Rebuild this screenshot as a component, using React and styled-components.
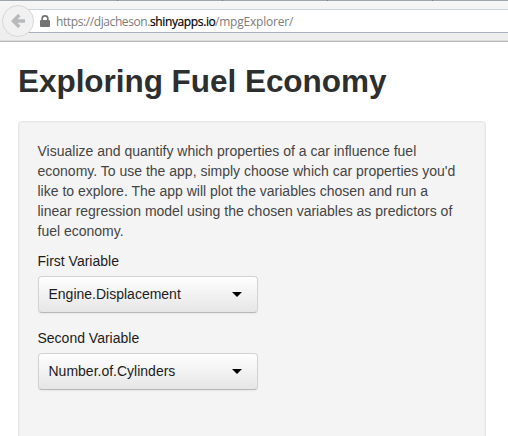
import React from "react";
import styled, { createGlobalStyle } from "styled-components";

const GlobalStyle = createGlobalStyle`
  * { box-sizing: border-box; }
  body {
    margin: 0;
    overflow: hidden;
    background: #fff;
    color: #333;
    font: 14px/20px "Liberation Sans", Arial, sans-serif;
  }
`;

const Page = styled.div`
  height: 436px;
  overflow: hidden;
`;

const TabEdge = styled.div`
  display: flex;
  justify-content: space-between;
  height: 1px;
  padding: 0 75px 0 117px;
  background: #9ea3b0;
`;

const TabDivider = styled.span`
  width: 1px;
  background: #777c88;
`;

const Toolbar = styled.header`
  display: flex;
  align-items: center;
  height: 41px;
  padding-left: 2px;
  background: linear-gradient(#f7f6f7, #eeeeee 80%);
  border-bottom: 1px solid #b8b8b8;
  box-shadow: inset 0 -1px #dddddd;
`;

const BackButton = styled.button`
  z-index: 1;
  display: flex;
  flex: none;
  align-items: center;
  justify-content: center;
  width: 32px;
  height: 32px;
  padding: 0;
  border: 1px solid #d8d8d9;
  border-radius: 50%;
  background: #f1f1f2;
`;

const AddressBar = styled.div`
  display: flex;
  flex: 1;
  align-items: center;
  height: 24px;
  margin-left: -7px;
  padding-left: 13px;
  border-top: 1px solid #c9d0d7;
  border-bottom: 1px solid #a9b0bd;
  background: #fff;
`;

const LockIcon = styled.svg`
  flex: none;
  margin-right: 6px;
`;

const UrlPart = styled.span`
  flex: none;
  width: ${(p) => p.$width}px;
  padding-top: 2px;
  font: 12px/20px "Open Sans", "Noto Sans", sans-serif;
  letter-spacing: ${(p) => p.$spacing}px;
  color: ${(p) => (p.$host ? "#000" : "#7c7c7c")};
  -webkit-text-stroke: ${(p) => (p.$host ? "0.2px #000" : "0")};
  white-space: nowrap;
`;

const Content = styled.main`
  padding: 19px 22px 0 18px;
`;

const Title = styled.h1`
  margin: 0 0 20px;
  font-size: 31.5px;
  line-height: 40px;
  font-weight: bold;
  letter-spacing: -0.04px;
  color: #2d2f2f;
`;

const Well = styled.section`
  width: 468px;
  height: 340px;
  padding: 19px 19px 19px 18.5px;
  border: 1px solid #e6e6e6;
  border-radius: 4px;
  background: #f4f4f4;
  box-shadow: inset 0 0 1px 1px rgba(0, 0, 0, 0.025);
`;

const Description = styled.p`
  margin: 0 0 10px;
  color: #444;
  white-space: nowrap;
`;

const Field = styled.div`
  margin-bottom: 15px;
`;

const Label = styled.label`
  display: block;
  margin-bottom: 5px;
  color: #1c1c1c;
`;

const Select = styled.button`
  display: flex;
  align-items: center;
  justify-content: space-between;
  width: 220px;
  height: 37px;
  padding: 0 15px 1px 10px;
  border: 1px solid #d3d3d3;
  border-bottom-color: #b8b8b8;
  border-radius: 4px;
  background: linear-gradient(#fefefe, #e6e6e6);
  box-shadow: 0 1px 2px rgba(0, 0, 0, 0.05);
  color: #1c1c1c;
  font: 14px/20px "Liberation Sans", Arial, sans-serif;
`;

const Caret = styled.svg`
  flex: none;
`;

function VariableField({ id, label, value }) {
  return (
    <Field>
      <Label htmlFor={id}>{label}</Label>
      <Select id={id} type="button">
        {value}
        <Caret width="10" height="5" viewBox="0 0 10 5">
          <path d="M0 0h10L5 5z" fill="#000" />
        </Caret>
      </Select>
    </Field>
  );
}

export default function App() {
  return (
    <Page>
      <GlobalStyle />
      <TabEdge>
        <TabDivider />
        <TabDivider />
        <TabDivider />
        <TabDivider />
      </TabEdge>
      <Toolbar>
        <BackButton aria-label="Back">
          <svg width="14" height="14" viewBox="0 0 14 14" fill="none" stroke="#b8b9bb" strokeWidth="3.4">
            <path d="M8.3 1L2.4 7l5.9 6M3 7h11" />
          </svg>
        </BackButton>
        <AddressBar>
          <LockIcon width="10" height="12" viewBox="0 0 10 12">
            <path d="M2.2 6V3.5a2.8 2.6 0 0 1 5.6 0V6" fill="none" stroke="#737373" strokeWidth="1.7" />
            <rect y="5" width="10" height="7" rx="1" fill="#737373" />
          </LockIcon>
          <UrlPart $width={94} $spacing={-0.4}>https://djacheson.</UrlPart>
          <UrlPart $host $width={65} $spacing={-0.38}>shinyapps.io</UrlPart>
          <UrlPart $width={80} $spacing={-0.2}>/mpgExplorer/</UrlPart>
        </AddressBar>
      </Toolbar>
      <Content>
        <Title>Exploring Fuel Economy</Title>
        <Well>
          <Description>
            Visualize and quantify which properties of a car influence fuel
            <br />
            economy. To use the app, simply choose which car properties you'd
            <br />
            like to explore. The app will plot the variables chosen and run a
            <br />
            linear regression model using the chosen variables as predictors of
            <br />
            fuel economy.
          </Description>
          <VariableField id="first" label="First Variable" value="Engine.Displacement" />
          <VariableField id="second" label="Second Variable" value="Number.of.Cylinders" />
        </Well>
      </Content>
    </Page>
  );
}
